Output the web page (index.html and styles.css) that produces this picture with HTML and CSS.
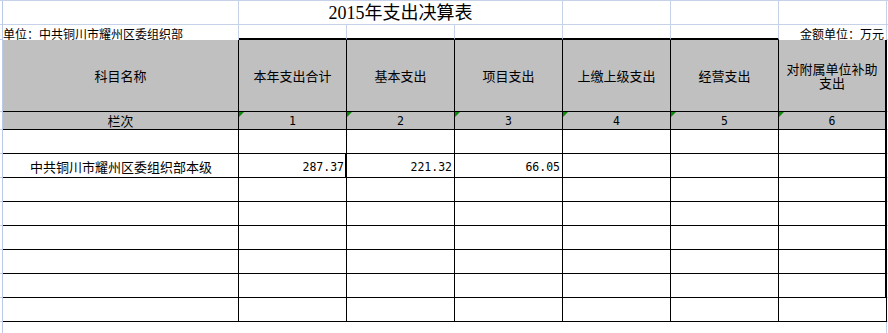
FILE: index.html
```html
<!DOCTYPE html>
<html lang="zh-CN">
<head>
<meta charset="utf-8">
<title>2015年支出决算表</title>
<link rel="stylesheet" href="styles.css">
</head>
<body>
<div class="sheet">
  <!-- row 1: title -->
  <div class="a"></div>
  <div class="g"></div>
  <div class="g title span3">2015年支出决算表</div>
  <div class="g"></div>
  <div class="g"></div>
  <div class="g"></div>
  <div class="z"></div>

  <!-- row 2: unit line -->
  <div class="a"></div>
  <div class="u left">单位：中共铜川市耀州区委组织部</div>
  <div class="u"></div>
  <div class="u"></div>
  <div class="u"></div>
  <div class="u"></div>
  <div class="u"></div>
  <div class="u right">金额单位：万元</div>
  <div class="z"></div>

  <!-- header -->
  <div class="a"></div>
  <div class="h">科目名称</div>
  <div class="h">本年支出合计</div>
  <div class="h">基本支出</div>
  <div class="h">项目支出</div>
  <div class="h">上缴上级支出</div>
  <div class="h">经营支出</div>
  <div class="h r two"><span class="ln">对附属单位补助</span><span class="ln">支出</span></div>
  <div class="z"></div>

  <!-- column numbers -->
  <div class="a"></div>
  <div class="h n">栏次</div>
  <div class="h n num mark">1</div>
  <div class="h n num mark">2</div>
  <div class="h n num mark">3</div>
  <div class="h n num mark">4</div>
  <div class="h n num mark">5</div>
  <div class="h n num mark r">6</div>
  <div class="z"></div>

  <!-- data rows -->
  <div class="a"></div><div class="d"></div><div class="d"></div><div class="d"></div><div class="d"></div><div class="d"></div><div class="d"></div><div class="d r"></div><div class="z"></div>

  <div class="a"></div>
  <div class="d name">中共铜川市耀州区委组织部本级</div>
  <div class="d val thick">287.37</div>
  <div class="d val">221.32</div>
  <div class="d val">66.05</div>
  <div class="d"></div>
  <div class="d"></div>
  <div class="d r"></div>
  <div class="z"></div>

  <div class="a"></div><div class="d"></div><div class="d"></div><div class="d"></div><div class="d"></div><div class="d"></div><div class="d"></div><div class="d r"></div><div class="z"></div>
  <div class="a"></div><div class="d"></div><div class="d"></div><div class="d"></div><div class="d"></div><div class="d"></div><div class="d"></div><div class="d r"></div><div class="z"></div>
  <div class="a"></div><div class="d"></div><div class="d"></div><div class="d"></div><div class="d"></div><div class="d"></div><div class="d"></div><div class="d r"></div><div class="z"></div>
  <div class="a"></div><div class="d"></div><div class="d"></div><div class="d"></div><div class="d"></div><div class="d"></div><div class="d"></div><div class="d r"></div><div class="z"></div>
  <div class="a"></div><div class="d"></div><div class="d"></div><div class="d"></div><div class="d"></div><div class="d"></div><div class="d"></div><div class="d r"></div><div class="z"></div>
  <div class="a"></div><div class="d"></div><div class="d"></div><div class="d"></div><div class="d"></div><div class="d"></div><div class="d"></div><div class="d"></div><div class="z"></div>

  <!-- below table -->
  <div class="fa"></div>
  <div class="f"></div><div class="f"></div><div class="f"></div><div class="f"></div><div class="f"></div><div class="f"></div>
  <div class="fh"></div>
  <div class="f"></div>
</div>
</body>
</html>
```

FILE: styles.css
```css
* {
  box-sizing: border-box;
}

html, body {
  margin: 0;
  padding: 0;
  background: #ffffff;
}

body {
  font-family: "Noto Sans CJK SC", "Liberation Sans", sans-serif;
  font-size: 13px;
  color: #000000;
}

.sheet {
  width: 888px;
  height: 333px;
  overflow: hidden;
  display: grid;
  grid-template-columns: 3px 236px repeat(6, 108px) 1px;
  grid-template-rows: 24px 15px 72px 18px repeat(8, 24px) 11px;
  border-top: 1px solid #c6d2e8;
}

/* column A sliver */
.a {
  border-right: 1px solid #b9c9e6;
  border-bottom: 1px solid #c6d2e8;
}

/* trailing 1px column */
.z {
  border-bottom: 1px solid #c6d2e8;
}

/* plain grid cell */
.g {
  border-right: 1px solid #c6d2e8;
  border-bottom: 1px solid #c6d2e8;
}

.title {
  display: flex;
  align-items: center;
  justify-content: center;
  font-family: "Liberation Serif", "Noto Sans CJK SC", serif;
  font-size: 18px;
  line-height: 20px;
  padding-top: 1px;
}

.span3 {
  grid-column: span 3;
}

/* unit row */
.u {
  border-right: 1px solid #c6d2e8;
  border-bottom: 2px solid #000000;
  display: flex;
  align-items: flex-end;
  font-size: 12px;
  line-height: 12px;
  white-space: nowrap;
  overflow: visible;
}

.u.left {
  justify-content: flex-start;
  margin-bottom: -2px;
}

.u.right {
  justify-content: flex-end;
  padding-right: 2px;
  margin-bottom: -2px;
}

/* header cells */
.h {
  background: #c0c0c0;
  border-right: 1px solid #000000;
  border-bottom: 1px solid #000000;
  display: flex;
  align-items: center;
  justify-content: center;
  text-align: center;
  line-height: 14px;
  position: relative;
}

.h.two {
  flex-direction: column;
  gap: 0;
  padding-top: 1px;
}

.ln {
  display: block;
  line-height: 14px;
  height: 14px;
}

.h.n {
  padding-top: 1px;
}

.num {
  font-family: "DejaVu Sans Mono", monospace;
  font-size: 11.5px;
}

.mark::before {
  content: "";
  position: absolute;
  top: 0;
  left: 0;
  border-top: 5px solid #0b8a0b;
  border-right: 5px solid transparent;
}

/* data cells */
.d {
  border-right: 1px solid #000000;
  border-bottom: 1px solid #000000;
  display: flex;
  align-items: center;
}

.r {
  border-right-width: 2px;
}

.name {
  justify-content: center;
  padding-left: 1px;
  padding-top: 2px;
}

.val {
  justify-content: flex-end;
  padding-right: 2px;
  font-family: "DejaVu Sans Mono", monospace;
  font-size: 11.5px;
  padding-top: 2px;
}

.thick {
  border-right-width: 2px;
  padding-right: 1px;
}

/* area below the table */
.fa {
  border-right: 1px solid #b9c9e6;
}

.fh {
  border-right: 1px solid #c6d2e8;
}

.f {
  border: 0;
}
```
